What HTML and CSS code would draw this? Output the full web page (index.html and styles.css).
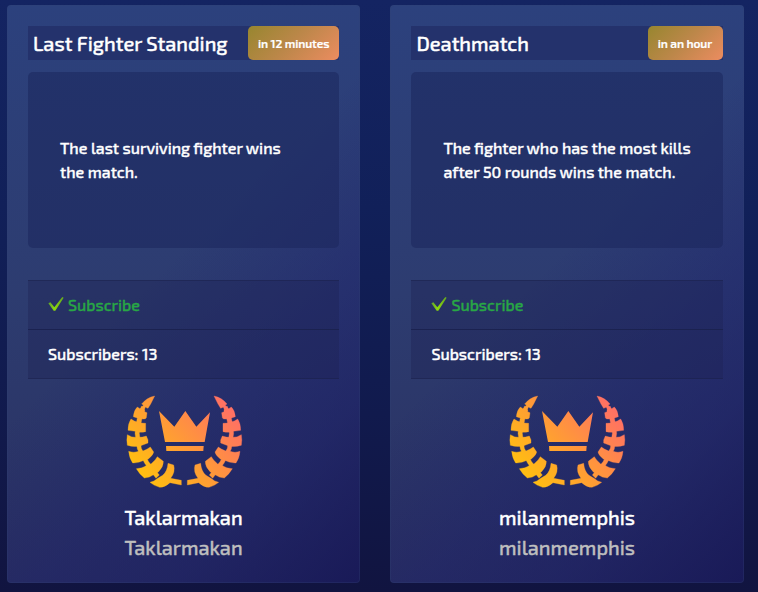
FILE: index.html
```
<!DOCTYPE html>
<html lang="en">
<head>
<meta charset="utf-8">
<title>Matches</title>
<link rel="stylesheet" href="styles.css">
</head>
<body>
<svg class="defs" width="0" height="0" aria-hidden="true">
  <defs>
    <linearGradient id="gold" gradientUnits="userSpaceOnUse" x1="65" y1="245" x2="310" y2="35">
      <stop offset="0" stop-color="#ffbd12"/><stop offset="1" stop-color="#ff7163"/>
    </linearGradient>
    <linearGradient id="lime" x1="0" y1="0" x2="1" y2="0">
      <stop offset="0" stop-color="#5da32b"/><stop offset=".4" stop-color="#8dd80d"/><stop offset="1" stop-color="#62a51f"/>
    </linearGradient>
    <g id="branch">
      <path d="M104 18Q80 23 65 42L70 45L66 54L74 55L75 51L84 55L92 42Z"/>
      <path d="M52 51L60 56L64 53L74 60V65L81 68L79 83Q77 88 70 87L54 85L40 80Q42 60 52 51Z"/>
      <path d="M33 87L43 93L50 95L62 99L77 100V125Q60 129 46 124L24 121Q24 100 33 87Z"/>
      <path d="M22 134Q33 142 48 142H57Q67 142 79 138Q86 150 84 159L60 168Q40 172 22 166Q19 150 22 134Z"/>
      <path d="M26 184Q42 190 57 183L67 184Q82 178 91 171L101 186Q100 195 85 207L72 211Q55 220 38 219Q28 205 26 184Z"/>
      <path d="M49 236Q66 236 80 226L93 222Q107 210 112 200L130 214Q131 230 115 246L103 253Q88 264 73 264Q58 252 49 236Z"/>
      <path d="M90 277Q104 274 113 265L128 256Q142 245 144 220L161 225Q167 245 152 265L184 271V285L150 278Q135 292 119 292Q103 288 90 277Z"/>
      <path d="M64 49H76L65 90L58 130L64 175L86 215L118 255L108 265L74 220L52 177L45 130L51 88Z"/>
    </g>
    <mask id="laurel" maskUnits="userSpaceOnUse" x="0" y="0" width="390" height="315">
      <g fill="#fff">
        <g stroke="#fff" stroke-width="1">
          <use href="#branch"/>
          <use href="#branch" transform="translate(386 0) scale(-1 1)"/>
        </g>
        <path d="M117 63L163 110L196 63L229 110L270 67L254 156H135Z"/>
        <path d="M138 168H251L250 183H139Z"/>
      </g>
    </mask>
  </defs>
</svg>
<main class="cards">
  <article class="card">
    <header class="head"><h2 class="title">Last Fighter Standing</h2><span class="when when-minutes">in 12 minutes</span></header>
    <div class="rules"><p>The last surviving fighter wins<br>the match.</p></div>
    <ul class="list">
      <li class="row subscribe"><svg class="check" viewBox="0 0 48 42"><path d="M1 19L7 16L19 31L43 0L47 2L22 41H17Z" fill="url(#lime)"/></svg><span>Subscribe</span></li>
      <li class="row"><span>Subscribers: 13</span></li>
    </ul>
    <svg class="laurel" viewBox="0 0 390 315"><path d="M0 0H390V315H0Z" fill="url(#gold)" mask="url(#laurel)"/></svg>
    <p class="name">Taklarmakan</p>
    <p class="name alias">Taklarmakan</p>
  </article>
  <article class="card">
    <header class="head"><h2 class="title">Deathmatch</h2><span class="when when-hour">in an hour</span></header>
    <div class="rules"><p>The fighter who has the most kills<br>after 50 rounds wins the match.</p></div>
    <ul class="list">
      <li class="row subscribe"><svg class="check" viewBox="0 0 48 42"><path d="M1 19L7 16L19 31L43 0L47 2L22 41H17Z" fill="url(#lime)"/></svg><span>Subscribe</span></li>
      <li class="row"><span>Subscribers: 13</span></li>
    </ul>
    <svg class="laurel" viewBox="0 0 390 315"><path d="M0 0H390V315H0Z" fill="url(#gold)" mask="url(#laurel)"/></svg>
    <p class="name">milanmemphis</p>
    <p class="name alias">milanmemphis</p>
  </article>
</main>
</body>
</html>
```
FILE: styles.css
```
* { box-sizing: border-box; }
body {
  margin: 0;
  height: 592px;
  overflow: hidden;
  font: 500 16px/24px "Exo 2", Roboto, "Open Sans", sans-serif;
  color: #fff;
  -webkit-text-stroke: .4px currentColor;
  background: linear-gradient(#142462 0, #112059 35%, #111a4d 70%, #111440 100%);
}
.defs { position: absolute; }
h2, p, ul { margin: 0; padding: 0; }
.cards { display: grid; grid-template-columns: 353px 353.4px; gap: 30.4px; padding: 5px 0 0 7px; }
.card {
  height: 578px;
  padding: 20px;
  border: 1px solid rgba(50, 65, 115, .3);
  border-radius: 4px;
  background:
    linear-gradient(135deg, rgba(26, 28, 108, 0) 45%, rgba(26, 28, 108, .35) 65%, rgba(24, 25, 100, .5) 80%, rgba(22, 22, 86, .85) 100%) border-box,
    linear-gradient(#2c417d 0, #2d3c70 50%, #2a3060 100%) border-box;
}
.head { display: flex; justify-content: space-between; height: 34px; padding-left: 5px; background: #24326c; }
.title { font-size: 20px; font-weight: 500; line-height: 34px; white-space: nowrap; }
.when {
  padding: 0 10px;
  border-radius: 5px;
  font-size: 12px;
  line-height: 35px;
  font-weight: 600;
  letter-spacing: -.12px;
  -webkit-text-stroke-width: .2px;
  white-space: nowrap;
  background: linear-gradient(135deg, #97862f, #bd874a 50%, #ec8c60);
}
.when-minutes { width: 91px; }
.when-hour { width: 75px; }
.rules {
  display: flex;
  align-items: center;
  height: 176px;
  margin-top: 12px;
  padding-left: 32px;
  border-radius: 5px;
  background: rgba(27, 38, 92, .55);
  white-space: nowrap;
}
.list { margin-top: 32px; list-style: none; background: rgba(29, 36, 86, .4); }
.row { display: flex; align-items: center; height: 49px; padding: 0 20px; border-top: 1px solid #1b2250; }
.row:first-child { border-top-color: rgba(25, 31, 73, .5); }
.row:last-child { height: 50px; border-bottom: 1px solid rgba(25, 31, 73, .5); }
.subscribe { color: #28a745; }
.check { width: 16px; height: 14px; margin: -2px 4px 0 0; }
.laurel { display: block; width: 130px; height: 105px; margin: 11px 0 0 92px; }
.name { margin-top: 7px; height: 30px; text-align: center; font-size: 20px; line-height: 30px; }
.alias { margin-top: 0; color: #bebebe; }
```
